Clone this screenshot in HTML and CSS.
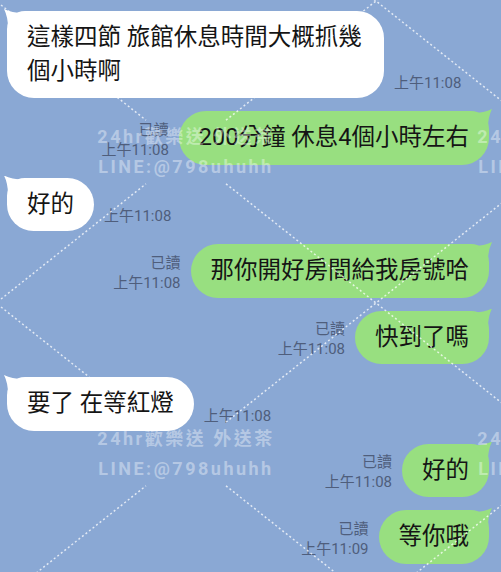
FILE: index.html
```html
<!DOCTYPE html>
<html lang="zh-Hant">
<head>
<meta charset="utf-8">
<title>LINE chat</title>
<link rel="stylesheet" href="styles.css">
</head>
<body>
<div class="screen">
  <div class="chat">
    <div class="row in">
      <div class="bubble">這樣四節 旅館休息時間大概抓幾個小時啊</div>
      <div class="meta"><span>上午11:08</span></div>
    </div>
    <div class="row out">
      <div class="meta"><span>已讀</span><span>上午11:08</span></div>
      <div class="bubble">200分鐘 休息4個小時左右</div>
    </div>
    <div class="row in">
      <div class="bubble">好的</div>
      <div class="meta"><span>上午11:08</span></div>
    </div>
    <div class="row out">
      <div class="meta"><span>已讀</span><span>上午11:08</span></div>
      <div class="bubble">那你開好房間給我房號哈</div>
    </div>
    <div class="row out">
      <div class="meta"><span>已讀</span><span>上午11:08</span></div>
      <div class="bubble">快到了嗎</div>
    </div>
    <div class="row in">
      <div class="bubble">要了 在等紅燈</div>
      <div class="meta"><span>上午11:08</span></div>
    </div>
    <div class="row out">
      <div class="meta"><span>已讀</span><span>上午11:08</span></div>
      <div class="bubble">好的</div>
    </div>
    <div class="row out">
      <div class="meta"><span>已讀</span><span>上午11:09</span></div>
      <div class="bubble">等你哦</div>
    </div>
  </div>

  <svg class="watermark" width="501" height="572" viewBox="0 0 501 572" aria-hidden="true">
    <g class="wm-lines">
      <line x1="-154" y1="-118.2" x2="146" y2="120.2"/>
      <line x1="-154" y1="183.8" x2="146" y2="422.2"/>
      <line x1="226" y1="-118.2" x2="526" y2="120.2"/>
      <line x1="226" y1="183.8" x2="526" y2="422.2"/>
      <line x1="226" y1="485.8" x2="526" y2="724.2"/>
      <line x1="-154" y1="422.2" x2="146" y2="183.8"/>
      <line x1="-154" y1="724.2" x2="146" y2="485.8"/>
      <line x1="226" y1="120.2" x2="526" y2="-118.2"/>
      <line x1="226" y1="422.2" x2="526" y2="183.8"/>
      <line x1="226" y1="724.2" x2="526" y2="485.8"/>
    </g>
    <g class="wm-text">
      <text x="186" y="143">24hr歡樂送 外送茶</text>
      <text x="186" y="173">LINE:@798uhuhh</text>
      <text x="186" y="445">24hr歡樂送 外送茶</text>
      <text x="186" y="475">LINE:@798uhuhh</text>
      <text x="566" y="143">24hr歡樂送 外送茶</text>
      <text x="566" y="173">LINE:@798uhuhh</text>
      <text x="566" y="445">24hr歡樂送 外送茶</text>
      <text x="566" y="475">LINE:@798uhuhh</text>
    </g>
  </svg>
</div>
</body>
</html>
```

FILE: styles.css
```css
html, body {
  margin: 0;
  padding: 0;
  background: #8aa8d4;
}

.screen {
  position: relative;
  width: 501px;
  height: 572px;
  overflow: hidden;
  background: #8aa8d4;
  font-family: Roboto, "Noto Sans CJK TC", sans-serif;
}

.chat {
  display: flex;
  flex-direction: column;
  gap: 13px;
  padding: 11px 12px 0 7px;
}

.row {
  display: flex;
  align-items: flex-end;
  gap: 10px;
}

.row.out {
  justify-content: flex-end;
}

.bubble {
  position: relative;
  box-sizing: border-box;
  max-width: 377px;
  padding: 10px 20px;
  font-size: 23.5px;
  line-height: 33.5px;
  color: #151515;
  border-radius: 27px;
}

.in .bubble {
  background: #ffffff;
  border-top-left-radius: 18px;
}

.out .bubble {
  background: #98df80;
  border-top-right-radius: 18px;
}

.in .bubble::before {
  content: "";
  position: absolute;
  top: -2px;
  left: -3px;
  width: 19px;
  height: 19px;
  background: #ffffff;
  clip-path: path('M0 0 Q8 4 19 4 L4 19 Q4 8 0 0 Z');
}

.out .bubble::after {
  content: "";
  position: absolute;
  top: -2px;
  right: -3px;
  width: 19px;
  height: 19px;
  background: #98df80;
  clip-path: path('M19 0 Q11 4 0 4 L15 19 Q15 8 19 0 Z');
}

.meta {
  display: flex;
  flex-direction: column;
  align-items: flex-end;
  margin-bottom: 5px;
  font-size: 15px;
  line-height: 20px;
  color: #4f5e7c;
  white-space: nowrap;
  flex: none;
}

.watermark {
  position: absolute;
  left: 0;
  top: 0;
  pointer-events: none;
}

.wm-lines line {
  stroke: #ffffff;
  stroke-opacity: 0.75;
  stroke-width: 1.5;
  stroke-dasharray: 2 2.5;
}

.wm-text text {
  fill: #ffffff;
  fill-opacity: 0.38;
  font-family: Roboto, "Noto Sans CJK TC", sans-serif;
  font-size: 18px;
  font-weight: 700;
  letter-spacing: 2.5px;
  text-anchor: middle;
}
```
